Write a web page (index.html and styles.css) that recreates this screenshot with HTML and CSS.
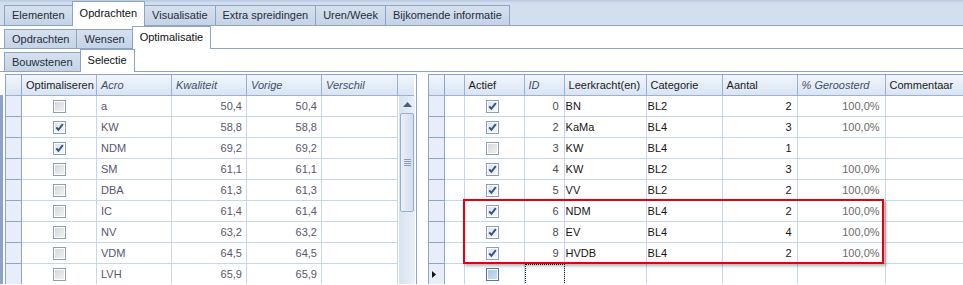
FILE: index.html
```html
<!DOCTYPE html>
<html lang="nl">
  <head>
    <meta charset="utf8">
    <title>Opdrachten - Optimalisatie</title>
    <link rel="stylesheet" href="styles.css">
  </head>
  <body>
    <div class="tabstrip top">
      <span class="tab">Elementen</span>
      <span class="tab active">Opdrachten</span>
      <span class="tab">Visualisatie</span>
      <span class="tab">Extra spreidingen</span>
      <span class="tab">Uren/Week</span>
      <span class="tab">Bijkomende informatie</span>
    </div>
    <div class="tabstrip sub">
      <span class="tab">Opdrachten</span>
      <span class="tab">Wensen</span>
      <span class="tab active">Optimalisatie</span>
    </div>
    <div class="tabstrip sub">
      <span class="tab">Bouwstenen</span>
      <span class="tab active">Selectie</span>
    </div>

    <div class="panes">
      <!-- bouwstenen -->
      <div class="grid left">
        <div class="hrow">
          <div class="hc"></div>
          <div class="hc">Optimaliseren</div>
          <div class="hc it">Acro</div>
          <div class="hc it">Kwaliteit</div>
          <div class="hc it">Vorige</div>
          <div class="hc it">Verschil</div>
          <div class="hc last"></div>
        </div>
        <div class="body">
          <div class="rows" id="left-rows"></div>
          <div class="vscroll">
            <svg class="arrow" width="9" height="5" viewBox="0 0 9 5"><path d="M0 5 L4.5 0 L9 5 Z" fill="#4a5d7c"/></svg>
            <div class="thumb">
              <svg width="7" height="8" viewBox="0 0 7 8"><path d="M0 .5h7M0 2.5h7M0 4.5h7M0 6.5h7" stroke="#8a9cb6" stroke-width="1"/></svg>
            </div>
          </div>
        </div>
      </div>

      <!-- leerkrachten -->
      <div class="grid right">
        <div class="hrow">
          <div class="hc"></div>
          <div class="hc"></div>
          <div class="hc">Actief</div>
          <div class="hc it">ID</div>
          <div class="hc">Leerkracht(en)</div>
          <div class="hc">Categorie</div>
          <div class="hc">Aantal</div>
          <div class="hc it">% Geroosterd</div>
          <div class="hc">Commentaar</div>
        </div>
        <div class="rows" id="right-rows"></div>
        <div class="mark"></div>
      </div>
    </div>

    <script src="app.js"></script>
  </body>
</html>
```

FILE: styles.css
```css
body {
  margin: 0;
  font-family: "Liberation Sans", Arial, sans-serif;
  font-size: 11px;
  color: #1a1a1a;
  background: #fff;
  overflow: hidden;
}

/* tabs */
.tabstrip {
  display: flex;
  align-items: flex-end;
  box-sizing: border-box;
  padding-left: 4px;
  border-bottom: 1px solid #8ea4c4;
}
.tabstrip.top {
  height: 26px;
  background: linear-gradient(#b8c8de, #d3dfef 3px, #d3dfef);
}
.tabstrip.sub {
  height: 23px;
}
.tab {
  box-sizing: border-box;
  height: 20px;
  line-height: 19px;
  padding: 0 7px;
  margin-right: -1px;
  border: 1px solid #8ea4c4;
  border-bottom: none;
  background: linear-gradient(#d7e1ee, #c4d3e6);
  color: #1f2d40;
  white-space: nowrap;
}
.tabstrip.sub .tab {
  height: 19px;
  line-height: 18px;
}
.tab.active,
.tabstrip.sub .tab.active {
  position: relative;
  height: 25px;
  line-height: 22px;
  margin-bottom: -1px;
  background: #fff;
  color: #111;
}
.tabstrip.sub .tab.active {
  height: 23px;
  line-height: 21px;
}

/* grids */
.panes {
  position: relative;
  display: flex;
  gap: 11px;
  padding: 2px 0 0 5px;
  height: 212px;
  box-sizing: border-box;
}
.panes::before {
  content: "";
  position: absolute;
  left: 0;
  top: 23px;
  bottom: 0;
  width: 3px;
  background: #8ba3c5;
}
.grid {
  position: relative;
  border-top: 1px solid #8ea5c6;
  border-left: 1px solid #8ea5c6;
  overflow: hidden;
}
.grid.left {
  width: 410px;
  border-right: 1px solid #8ea5c6;
}
.grid.right {
  width: 535px;
}
.left .hrow {
  display: grid;
  grid-template-columns: 16px 75px 75px 75px 75px 76px 16px;
}
.left .row {
  display: grid;
  grid-template-columns: 16px 75px 75px 75px 75px 76px;
}
.right .hrow,
.right .row {
  display: grid;
  grid-template-columns: 16px 20px 60px 40px 82px 76px 75px 88px 78px;
}
.hrow {
  height: 21px;
}
.hc {
  box-sizing: border-box;
  border-right: 1px solid #9bb1cf;
  border-bottom: 1px solid #9bb1cf;
  background: linear-gradient(#f2f6fc, #d9e4f3);
  padding: 0 4px;
  line-height: 20px;
  white-space: nowrap;
  overflow: hidden;
  color: #1b1b1b;
}
.hc.it {
  font-style: italic;
  color: #3f4f68;
}
.hc:first-child {
  border-right-color: #8ea5c6;
}
.hc.last {
  border-right: none;
}

.body {
  display: flex;
}
.rows {
  width: 393px;
}
.right .rows {
  width: auto;
}
.row {
  height: 21px;
}
.c {
  box-sizing: border-box;
  border-right: 1px solid #c4d7ef;
  border-bottom: 1px solid #c4d7ef;
  line-height: 20px;
  padding: 0 4px;
  white-space: nowrap;
  overflow: hidden;
}
.c.ind {
  background: #e7eef9;
  border-right-color: #8ea5c6;
  border-bottom-color: #8ea5c6;
  display: flex;
  align-items: center;
  justify-content: center;
}
.c.num {
  text-align: right;
}
.c.mid {
  display: flex;
  align-items: center;
  justify-content: center;
}
.left .c {
  color: #575770;
}
.right .c {
  padding: 0 5px 0 1px;
  color: #151515;
}
.right .c.id {
  color: #4a4a4a;
}
.right .c.pct {
  color: #6a6a6a;
}
.right .c.focus {
  outline: 1px dotted #222;
  outline-offset: -1px;
}

.cb {
  box-sizing: border-box;
  width: 13px;
  height: 13px;
  border: 1px solid #8d9db4;
  box-shadow: inset 0 0 0 1px #fff;
  background: linear-gradient(135deg, #d3d5d8, #f3f3f3);
  display: block;
}
.cb.on {
  background: linear-gradient(135deg, #dfe3e8, #f6f7f8);
}
.cb svg {
  display: block;
}
.cb.new {
  border-color: #58749c;
  background: linear-gradient(135deg, #a9c3e4, #d2e1f3);
}

/* scrollbar */
.vscroll {
  width: 16px;
  height: 189px;
  background: linear-gradient(90deg, #d7e3f2, #e9f0f9);
  display: flex;
  flex-direction: column;
  align-items: center;
}
.vscroll .arrow {
  margin-top: 6px;
}
.thumb {
  box-sizing: border-box;
  margin-top: 6px;
  width: 14px;
  height: 99px;
  border: 1px solid #9aafcb;
  border-radius: 2px;
  background: linear-gradient(90deg, #eaf0f8, #d2deee);
  display: flex;
  align-items: center;
  justify-content: center;
}

/* highlighted rows */
.mark {
  position: absolute;
  left: 34px;
  top: 124px;
  width: 421px;
  height: 65px;
  box-sizing: border-box;
  border: 2px solid #e3000f;
  box-shadow: 2px 2px 3px rgba(0, 0, 0, 0.3);
  pointer-events: none;
}
```

FILE: app.js
```js
(function() {
  'use strict';

  const check = '<svg width="11" height="11" viewBox="0 0 11 11"><path d="M2.2 5.4 L4.4 7.8 L8.8 2.2" fill="none" stroke="#33568a" stroke-width="2"/></svg>';

  const checkbox = (state) => {
    if (state === 'new') {
      return '<span class="cb new"></span>';
    }
    return state ? `<span class="cb on">${check}</span>` : '<span class="cb"></span>';
  };

  const left = [
    [false, 'a', '50,4', '50,4'],
    [true, 'KW', '58,8', '58,8'],
    [true, 'NDM', '69,2', '69,2'],
    [false, 'SM', '61,1', '61,1'],
    [false, 'DBA', '61,3', '61,3'],
    [false, 'IC', '61,4', '61,4'],
    [false, 'NV', '63,2', '63,2'],
    [false, 'VDM', '64,5', '64,5'],
    [false, 'LVH', '65,9', '65,9']
  ];

  const right = [
    [true, '0', 'BN', 'BL2', '2', '100,0%'],
    [true, '2', 'KaMa', 'BL4', '3', '100,0%'],
    [false, '3', 'KW', 'BL4', '1', ''],
    [true, '4', 'KW', 'BL2', '3', '100,0%'],
    [true, '5', 'VV', 'BL2', '2', '100,0%'],
    [true, '6', 'NDM', 'BL4', '2', '100,0%'],
    [true, '8', 'EV', 'BL4', '4', '100,0%'],
    [true, '9', 'HVDB', 'BL4', '2', '100,0%']
  ];

  const leftRows = document.getElementById('left-rows');
  leftRows.innerHTML = left.map((r) => `
    <div class="row">
      <div class="c ind"></div>
      <div class="c mid">${checkbox(r[0])}</div>
      <div class="c">${r[1]}</div>
      <div class="c num">${r[2]}</div>
      <div class="c num">${r[3]}</div>
      <div class="c"></div>
    </div>`).join('');

  const arrow = '<svg width="4" height="7" viewBox="0 0 4 7"><path d="M0 0 L4 3.5 L0 7 Z" fill="#111"/></svg>';

  const rightRows = document.getElementById('right-rows');
  rightRows.innerHTML = right.map((r) => `
    <div class="row">
      <div class="c ind"></div>
      <div class="c"></div>
      <div class="c mid">${checkbox(r[0])}</div>
      <div class="c num id">${r[1]}</div>
      <div class="c">${r[2]}</div>
      <div class="c">${r[3]}</div>
      <div class="c num">${r[4]}</div>
      <div class="c num pct">${r[5]}</div>
      <div class="c"></div>
    </div>`).join('') + `
    <div class="row">
      <div class="c ind">${arrow}</div>
      <div class="c"></div>
      <div class="c mid">${checkbox('new')}</div>
      <div class="c focus"></div>
      <div class="c"></div>
      <div class="c"></div>
      <div class="c"></div>
      <div class="c"></div>
      <div class="c"></div>
    </div>`;
}());
```
